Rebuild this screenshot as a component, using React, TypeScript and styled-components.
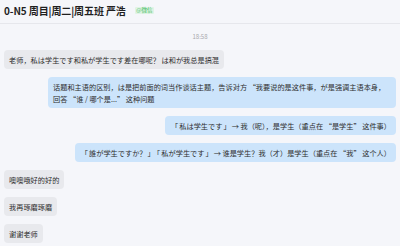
import React from "react";
import styled, { createGlobalStyle } from "styled-components";

const GlobalStyle = createGlobalStyle`
	html, body {
		margin: 0;
		padding: 0;
		background: #f5f6fa;
	}
	* {
		box-sizing: border-box;
	}
`;

type Msg = { side: "left" | "right"; text: React.ReactNode };

const App = () => {
	const messages: Msg[] = [
		{ side: "left", text: "老师，私は学生です和私が学生です差在哪呢？ は和が我总是搞混" },
		{
			side: "right",
			text: "话题和主语的区别，は是把前面的词当作谈话主题，告诉对方 “我要说的是这件事，が是强调主语本身，回答 “谁 / 哪个是...” 这种问题",
		},
		{
			side: "right",
			text: (
				<>
					<Mark>「</Mark>私は学生です<Mark>」</Mark>→ 我（呢），是学生（重点在 “是学生” 这件事）
				</>
			),
		},
		{
			side: "right",
			text: (
				<>
					<Mark>「</Mark>誰が学生ですか？<Mark>」</Mark>
					<Mark>「</Mark>私が学生です<Mark>」</Mark>→ 谁是学生？我（才）是学生（重点在 “我” 这个人）
				</>
			),
		},
		{ side: "left", text: "噢噢哦好的好的" },
		{ side: "left", text: "我再琢磨琢磨" },
		{ side: "left", text: "谢谢老师" },
	];

	return (
		<Container>
			<GlobalStyle />
			<Header>
				<Title>0-N5 周目|周二|周五班 严浩</Title>
				<Badge>@微信</Badge>
			</Header>
			<List>
				<Time>18:58</Time>
				{messages.map((m, i) => (
					<Row key={i} side={m.side}>
						<Bubble side={m.side}>{m.text}</Bubble>
					</Row>
				))}
			</List>
		</Container>
	);
};

export default App;

const Container = styled.div`
	width: 400px;
	height: 246px;
	overflow: hidden;
	display: flex;
	flex-direction: column;
	background-color: #f5f6fa;
	font-family: "Noto Sans CJK SC", "Noto Sans", sans-serif;
	color: #2b2b2b;
`;

const Header = styled.div`
	height: 24px;
	flex-shrink: 0;
	display: flex;
	align-items: center;
	padding: 0 4px 2px;
	gap: 9px;
	border-bottom: 1px solid #e6e7ec;
`;

const Title = styled.div`
	font-size: 10px;
	font-weight: 700;
	color: #1f1f1f;
	letter-spacing: -0.1px;
`;

const Badge = styled.span`
	font-size: 5.5px;
	line-height: 7px;
	padding: 0 1.5px;
	border-radius: 1px;
	color: #3dbb5a;
	background-color: #e0f3e5;
`;

const List = styled.div`
	display: flex;
	flex-direction: column;
	gap: 8px;
	padding: 8px 4px 0;
`;

const Time = styled.div`
	text-align: center;
	font-size: 6px;
	line-height: 10px;
	color: #a8a9ad;
`;

const Row = styled.div<{ side: "left" | "right" }>`
	display: flex;
	justify-content: ${(p) => (p.side === "left" ? "flex-start" : "flex-end")};
`;

const Bubble = styled.div<{ side: "left" | "right" }>`
	max-width: 348px;
	font-size: 7.2px;
	line-height: 12px;
	padding: 3.5px 5px;
	border-radius: 4px;
	background-color: ${(p) => (p.side === "left" ? "#e8e9ed" : "#cce4fb")};
	color: #2e2e2e;
`;

const Mark = styled.span`
	margin: 0 1px;
`;
